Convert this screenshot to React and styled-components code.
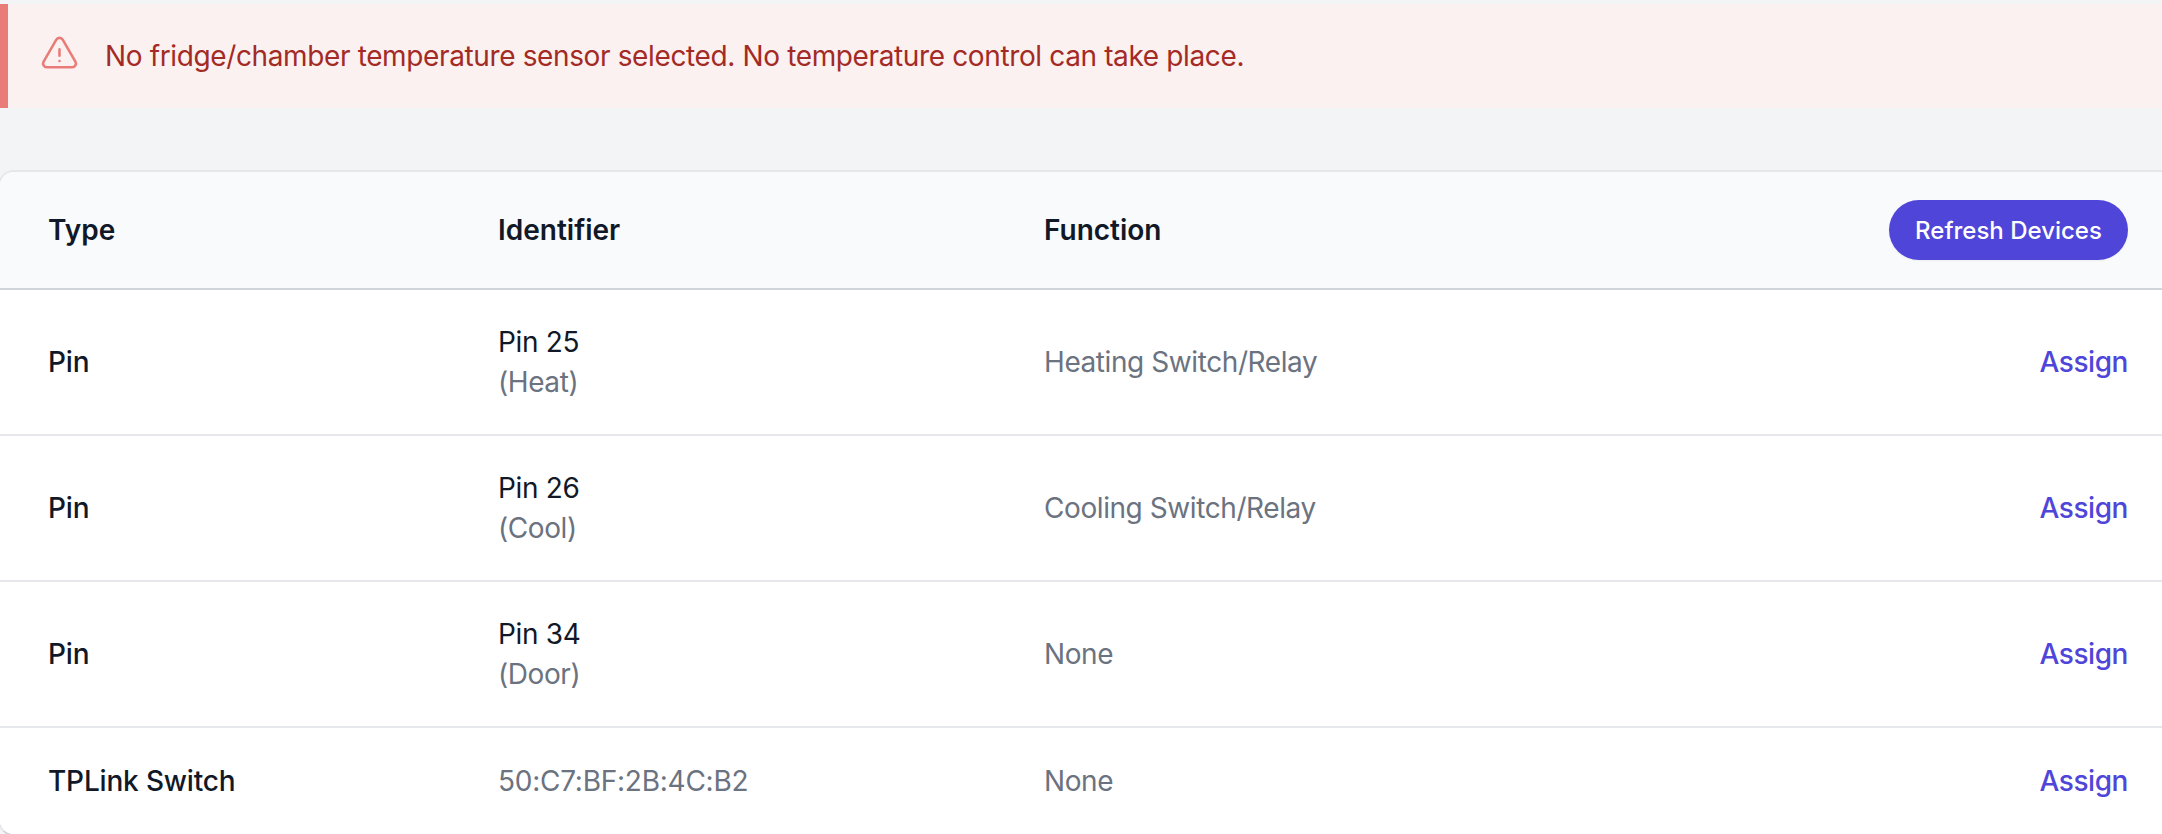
import React from 'react';
import styled, { createGlobalStyle } from 'styled-components';

const GlobalStyle = createGlobalStyle`
  html, body {
    margin: 0;
    padding: 0;
    background: #f3f4f6;
    font-family: Inter, "Liberation Sans", sans-serif;
    -webkit-font-smoothing: antialiased;
  }
`;

const Page = styled.div`
  width: 2162px;
  height: 834px;
  padding-top: 4px;
  box-sizing: border-box;
  overflow: hidden;
`;

const Alert = styled.div`
  display: flex;
  align-items: center;
  gap: 25px;
  height: 104px;
  padding-left: 31px;
  box-sizing: border-box;
  background: #fbf1f0;
  border-left: 8px solid #e97c78;
  margin-bottom: 62px;
`;

const AlertIcon = styled.svg`
  width: 41px;
  height: 41px;
  flex: none;
  margin-top: -4px;
  fill: none;
  stroke: #e97c78;
  stroke-width: 1.5;
  stroke-linecap: round;
  stroke-linejoin: round;
`;

const AlertText = styled.p`
  margin: 0;
  font-size: 28px;
  line-height: 40px;
  letter-spacing: -0.37px;
  color: #a32a25;
`;

const Card = styled.div`
  background: #fff;
  border: 2px solid #e5e7eb;
  border-bottom-color: #d1d5db;
  border-radius: 16px;
  overflow: hidden;
  margin-right: -24px;
  margin-left: -2px;
`;

const Row = styled.div`
  display: grid;
  grid-template-columns: 450px 546px 1fr auto;
  align-items: center;
  padding: 0 56px 0 48px;
  height: ${(p) => p.$height}px;
  box-sizing: border-box;
  background: ${(p) => (p.$head ? '#f9fafb' : '#fff')};
  border-bottom: ${(p) => (p.$last ? 'none' : `2px solid ${p.$head ? '#d1d5db' : '#e5e7eb'}`)};
`;

const HeadCell = styled.div`
  font-size: 28px;
  font-weight: 600;
  color: #111827;
`;

const TypeCell = styled.div`
  font-size: 28px;
  font-weight: 500;
  line-height: 40px;
  letter-spacing: -0.17px;
  color: #111827;
`;

const Muted = styled.div`
  font-size: 28px;
  line-height: 40px;
  letter-spacing: ${(p) => (p.$mono ? '-0.25px' : '-0.42px')};
  color: #6b7280;
`;

const PinName = styled.div`
  font-size: 28px;
  line-height: 40px;
  letter-spacing: -0.35px;
  color: #111827;
`;

const RefreshButton = styled.button`
  height: 60px;
  width: 239px;
  padding: 0;
  border: none;
  border-radius: 30px;
  background: #4f46d9;
  color: #fff;
  font-family: inherit;
  font-size: 24px;
  font-weight: 500;
  box-shadow: 0 1px 2px rgba(0, 0, 0, 0.05);
`;

const AssignLink = styled.a`
  font-size: 28px;
  font-weight: 500;
  letter-spacing: -0.45px;
  color: #4f46d9;
  text-align: right;
`;

const devices = [
  { type: 'Pin', pin: 'Pin 25', role: '(Heat)', fn: 'Heating Switch/Relay' },
  { type: 'Pin', pin: 'Pin 26', role: '(Cool)', fn: 'Cooling Switch/Relay' },
  { type: 'Pin', pin: 'Pin 34', role: '(Door)', fn: 'None' },
  { type: 'TPLink Switch', mac: '50:C7:BF:2B:4C:B2', fn: 'None' },
];

const App = () => (
  <Page>
    <GlobalStyle />
    <Alert>
      <AlertIcon viewBox="0 0 24 24">
        <path d="M12 9v3.75m-9.303 3.376c-.866 1.5.217 3.374 1.948 3.374h14.71c1.73 0 2.813-1.874 1.948-3.374L13.949 3.378c-.866-1.5-3.032-1.5-3.898 0L2.697 16.126zM12 15.75h.007v.008H12v-.008z" />
      </AlertIcon>
      <AlertText>No fridge/chamber temperature sensor selected. No temperature control can take place.</AlertText>
    </Alert>
    <Card>
      <Row $head $height={118}>
        <HeadCell>Type</HeadCell>
        <HeadCell>Identifier</HeadCell>
        <HeadCell>Function</HeadCell>
        <RefreshButton>Refresh Devices</RefreshButton>
      </Row>
      {devices.map((d, i) => (
        <Row key={i} $height={d.mac ? 106 : 146} $last={i === devices.length - 1}>
          <TypeCell>{d.type}</TypeCell>
          {d.mac ? (
            <Muted $mono>{d.mac}</Muted>
          ) : (
            <div>
              <PinName>{d.pin}</PinName>
              <Muted>{d.role}</Muted>
            </div>
          )}
          <Muted>{d.fn}</Muted>
          <AssignLink>Assign</AssignLink>
        </Row>
      ))}
    </Card>
  </Page>
);

export default App;
